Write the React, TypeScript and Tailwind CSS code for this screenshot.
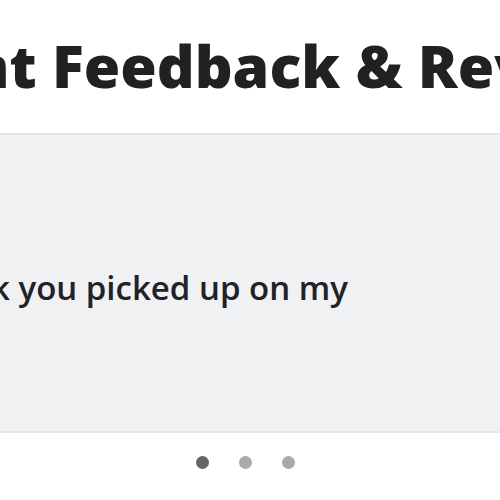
import React from "react";

const dots = [true, false, false];

export default function App() {
  return (
    <div className="w-[500px] h-[500px] overflow-hidden bg-white" style={{ fontFamily: '"Open Sans", sans-serif' }}>
      <div className="h-[133px] pt-[25px] overflow-hidden">
        <h1 className="ml-[-30px] whitespace-nowrap text-[59px] leading-[80px] font-extrabold text-[#212121]">
          nt Feedback &amp; Reviews
        </h1>
      </div>
      <section className="h-[300px] border-y-2 border-[#e4e6e9] bg-[#f0f1f3] overflow-hidden">
        <p className="mt-[131px] ml-[-9px] whitespace-nowrap text-[33px] leading-[44px] font-semibold text-[#222226]">
          k you picked up on my
        </p>
      </section>
      <div className="flex justify-center gap-[30px] pr-[9px] pt-[23px]">
        {dots.map((active, i) => (
          <span key={i} className={`w-[13px] h-[13px] rounded-full ${active ? "bg-[#666666]" : "bg-[#aaaaaa]"}`} />
        ))}
      </div>
    </div>
  );
}
